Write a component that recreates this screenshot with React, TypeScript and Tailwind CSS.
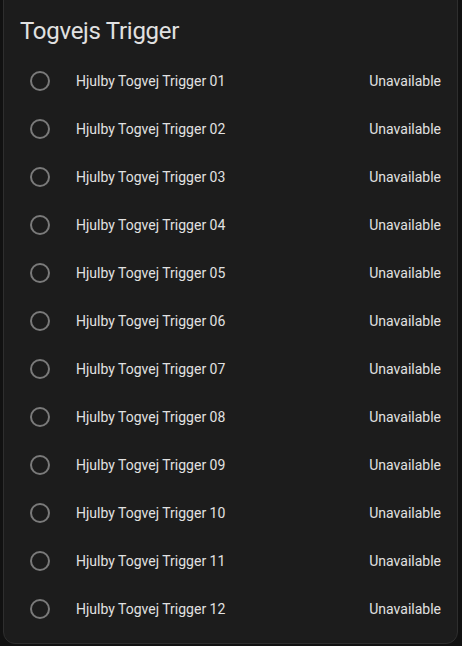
import React from "react";

const rows = Array.from({ length: 12 }, (_, i) => `Hjulby Togvej Trigger ${String(i + 1).padStart(2, "0")}`);

function RadioOff() {
  return (
    <svg width="24" height="24" viewBox="0 0 24 24">
      <circle cx="12" cy="12" r="9" fill="none" stroke="#7a7a7a" strokeWidth="2" />
    </svg>
  );
}

export default function App() {
  return (
    <div className="w-[462px] h-[646px] overflow-hidden bg-[#111111]" style={{ fontFamily: "Roboto, 'Noto Sans', sans-serif" }}>
      <div className="ml-[3px] mt-[-12px] w-[455px] rounded-xl border border-[#2e2e2e] bg-[#1c1c1c] pb-[14px]">
        <div className="px-4 pt-[18px] h-[72px] text-[24px] leading-[48px] text-[#e1e1e1] tracking-[-0.012em]">
          Togvejs Trigger
        </div>
        <div className="flex flex-col gap-2 px-4">
          {rows.map((name) => (
            <div key={name} className="flex h-10 items-center">
              <div className="flex w-10 h-10 items-center justify-center">
                <RadioOff />
              </div>
              <div className="ml-4 flex-1 text-[14px] text-[#e1e1e1]">{name}</div>
              <div className="text-[14px] text-[#e1e1e1]">Unavailable</div>
            </div>
          ))}
        </div>
      </div>
    </div>
  );
}
